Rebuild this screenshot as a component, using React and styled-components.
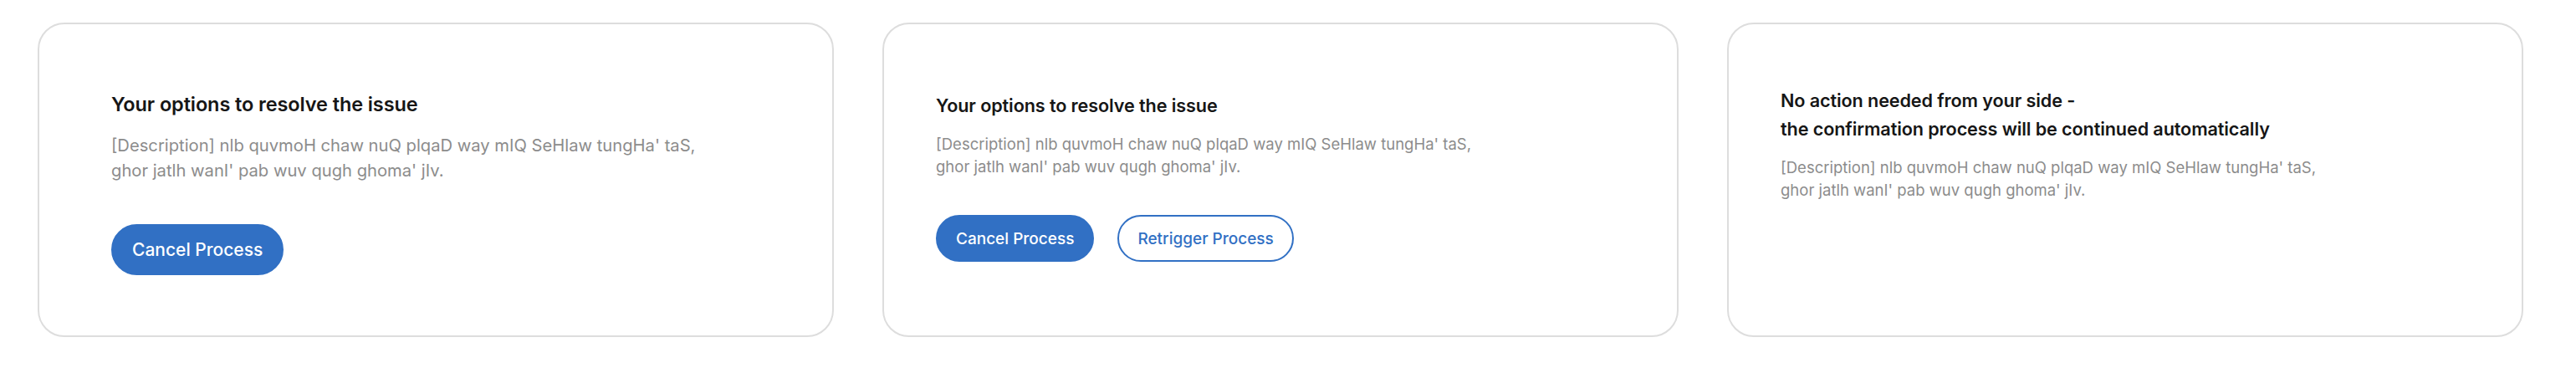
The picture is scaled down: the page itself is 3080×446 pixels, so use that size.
import React from "react";
import styled, { createGlobalStyle } from "styled-components";

const Global = createGlobalStyle`
  html, body { margin: 0; padding: 0; background: #ffffff; }
  body { font-family: "Inter", "Liberation Sans", sans-serif; -webkit-font-smoothing: antialiased; }
  * { box-sizing: border-box; }
`;

const Row = styled.div`
  display: flex;
  gap: 58px;
  padding: 27px 0 0 45px;
`;

const Card = styled.section`
  width: 952px;
  height: 376px;
  flex: none;
  border: 2px solid #dddddd;
  border-radius: 32px;
  background: #fff;
  padding: ${(p) => (p.$large ? "79px 0 0 86px" : `${p.$top ?? 80}px 0 0 62px`)};
  display: flex;
  flex-direction: column;
  align-items: flex-start;
`;

const Title = styled.h2`
  margin: 0;
  font-weight: 600;
  color: #161616;
  font-size: ${(p) => (p.$large ? "23.5px" : "21.6px")};
  line-height: 34px;
  letter-spacing: -0.1px;
`;

const Desc = styled.p`
  margin: ${(p) => (p.$large ? "17px 0 0" : "16px 0 0")};
  font-weight: 400;
  color: #8c8c8c;
  font-size: ${(p) => (p.$large ? "20.2px" : "18.5px")};
  line-height: ${(p) => (p.$large ? "30px" : "27px")};
`;

const Actions = styled.div`
  display: flex;
  gap: 28px;
  margin-top: ${(p) => (p.$large ? "49px" : "44px")};
`;

const Button = styled.button`
  font-family: "Inter", "Liberation Sans", sans-serif;
  font-weight: 500;
  font-size: ${(p) => (p.$large ? "21px" : "19px")};
  height: ${(p) => (p.$large ? "61px" : "56px")};
  padding: 0 ${(p) => (p.$large ? "23px" : "22px")};
  border-radius: 999px;
  border: 2px solid #3170c4;
  background: ${(p) => (p.$outline ? "#ffffff" : "#3170c4")};
  color: ${(p) => (p.$outline ? "#3170c4" : "#ffffff")};
  cursor: pointer;
  white-space: nowrap;
`;

const description = (
  <>
    [Description] nlb quvmoH chaw nuQ plqaD way mIQ SeHlaw tungHa' taS,
    <br />
    ghor jatlh wanI' pab wuv qugh ghoma' jIv.
  </>
);

export default function App() {
  return (
    <>
      <Global />
      <Row>
        <Card $large>
          <Title $large>Your options to resolve the issue</Title>
          <Desc $large>{description}</Desc>
          <Actions $large>
            <Button $large>Cancel Process</Button>
          </Actions>
        </Card>
        <Card>
          <Title>Your options to resolve the issue</Title>
          <Desc>{description}</Desc>
          <Actions>
            <Button>Cancel Process</Button>
            <Button $outline>Retrigger Process</Button>
          </Actions>
        </Card>
        <Card $top={74}>
          <Title>
            No action needed from your side -
            <br />
            the confirmation process will be continued automatically
          </Title>
          <Desc>{description}</Desc>
        </Card>
      </Row>
    </>
  );
}
